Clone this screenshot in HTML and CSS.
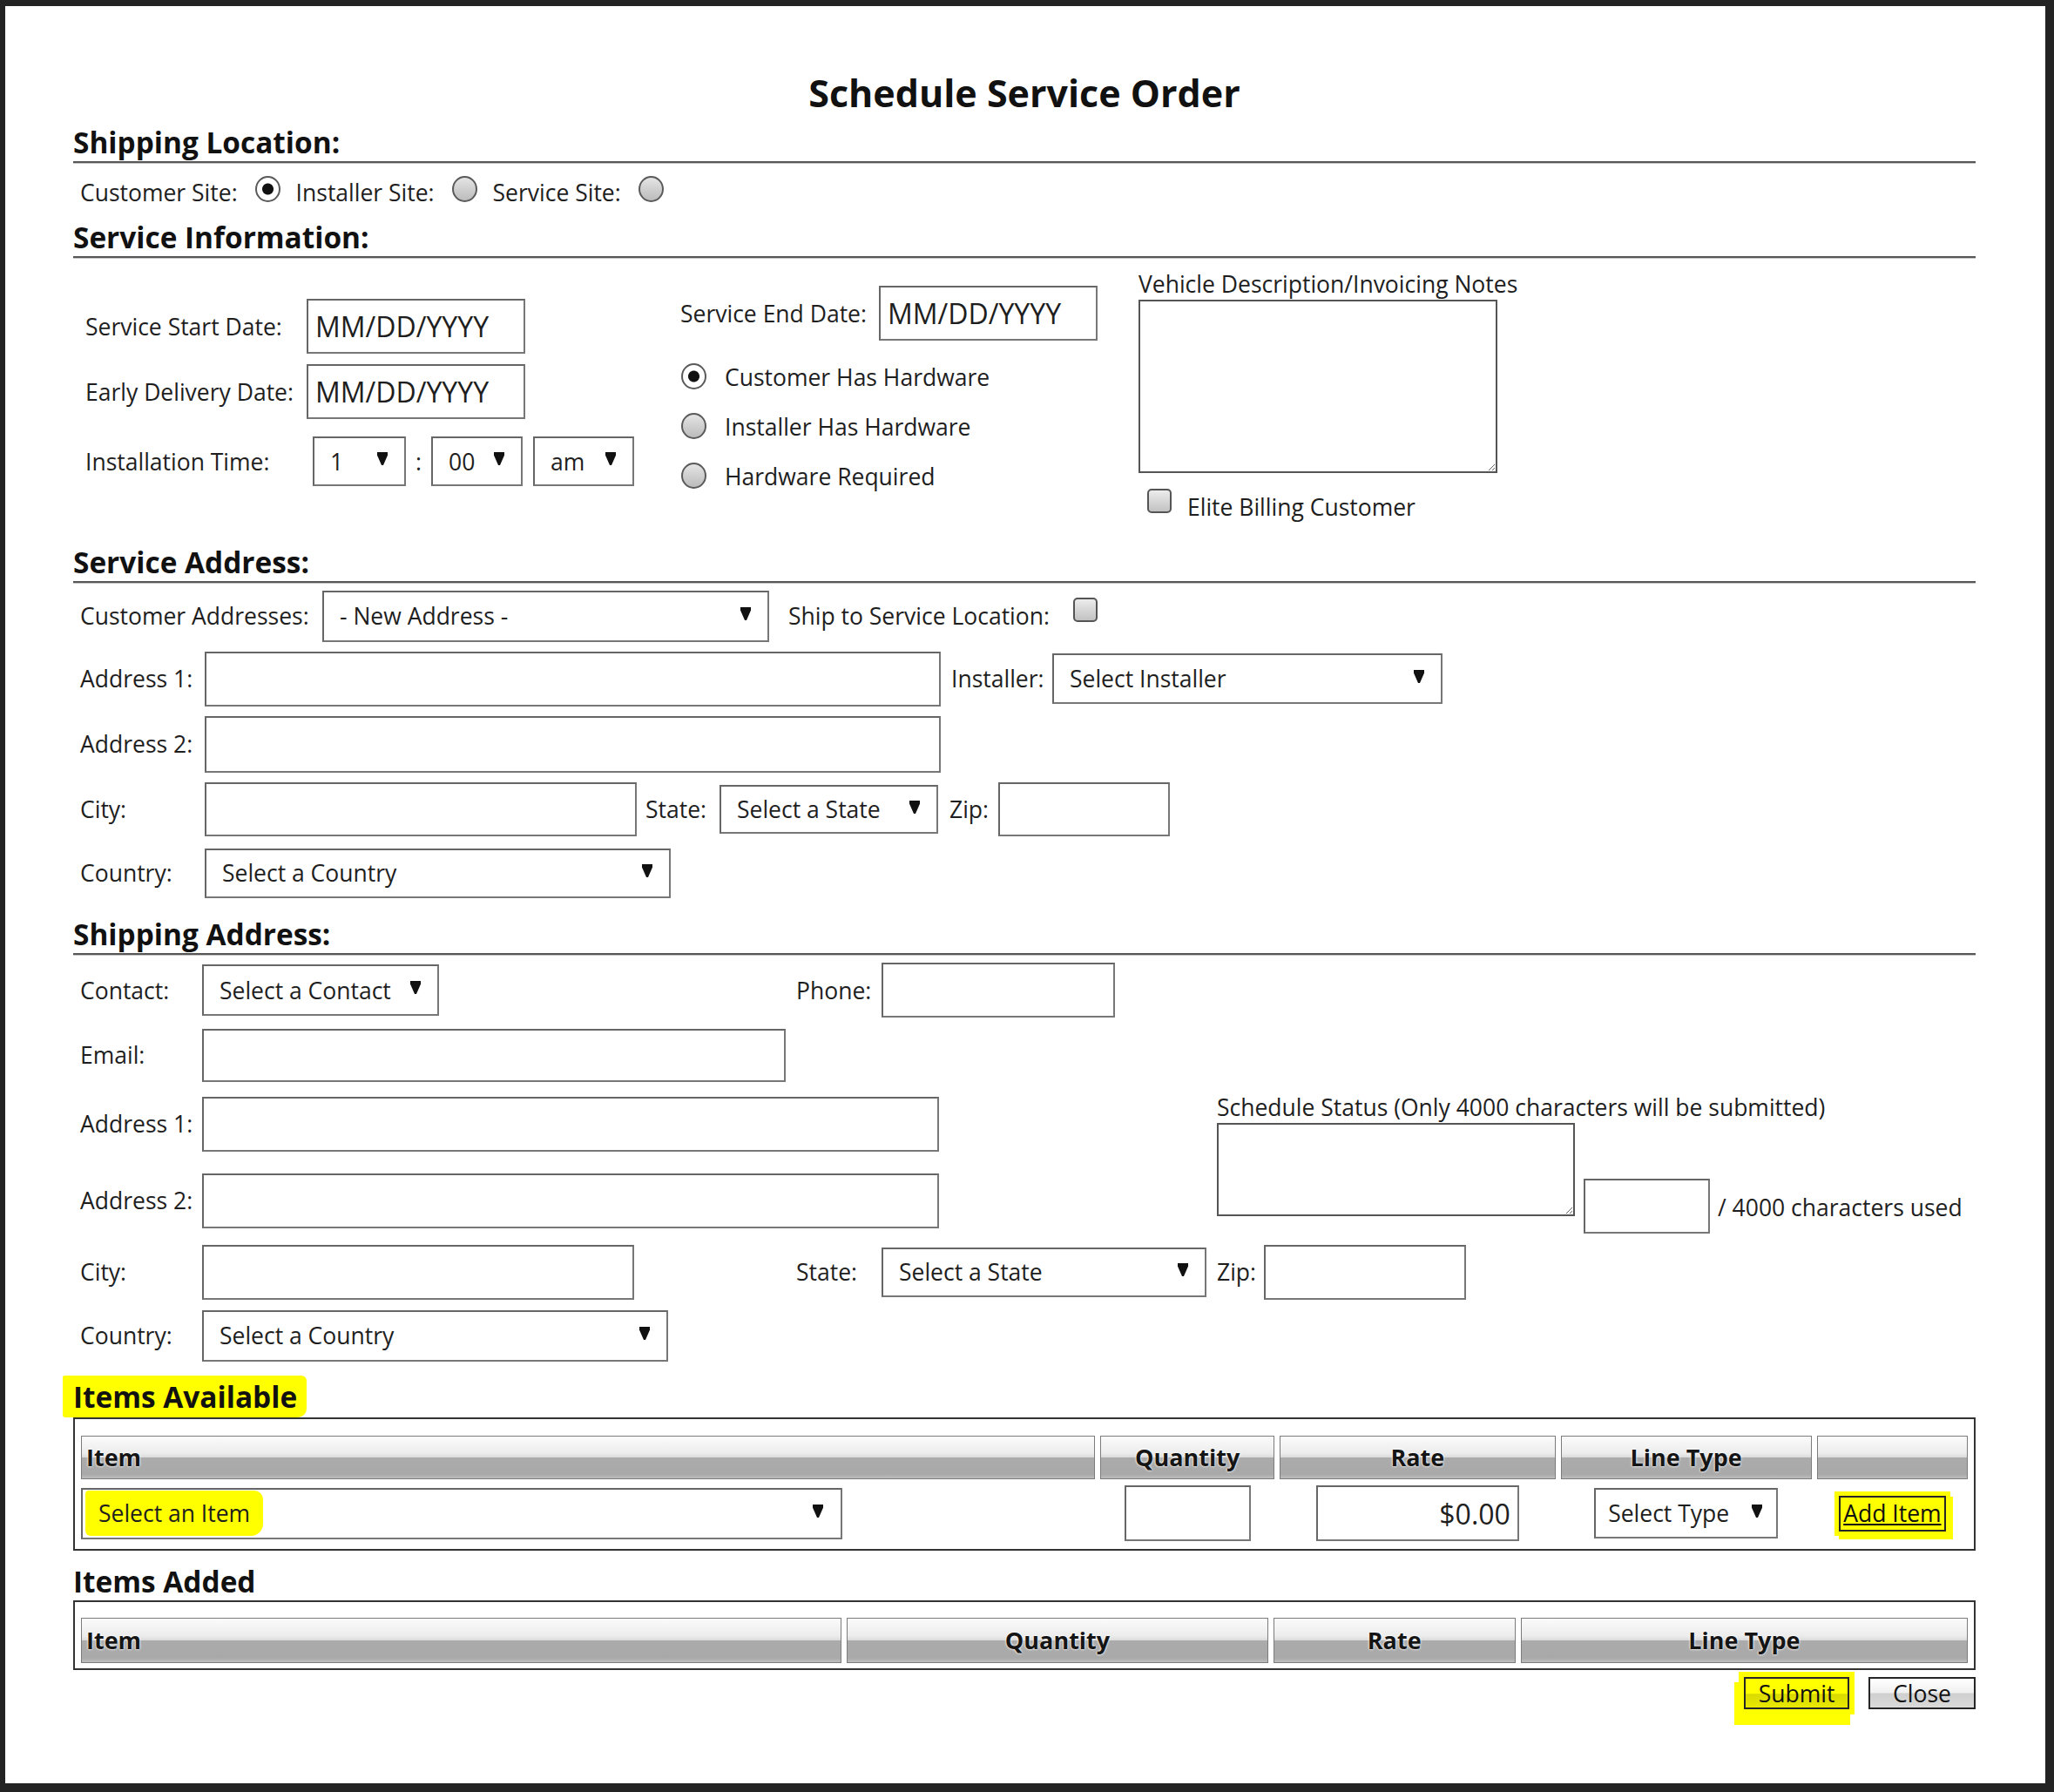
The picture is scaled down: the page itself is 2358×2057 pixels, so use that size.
FILE: index.html
```html
<!DOCTYPE html>
<html>
<head>
<meta charset="utf-8">
<title>Schedule Service Order</title>
<link rel="stylesheet" href="styles.css">
</head>
<body>
<div class="sheet">
  <h1 class="title">Schedule Service Order</h1>

  <h2 class="sec-h mt11">Shipping Location:</h2>
  <div class="loc-row">
    <span>Customer Site:</span><span class="radio on"></span>
    <span>Installer Site:</span><span class="radio"></span>
    <span>Service Site:</span><span class="radio"></span>
  </div>

  <h2 class="sec-h mt3">Service Information:</h2>
  <div class="svc-info">
    <div class="col-left">
      <div class="f-row"><span class="lbl w-l-si">Service Start Date:</span><input class="inp w-date h63" value="MM/DD/YYYY"></div>
      <div class="f-row mt12"><span class="lbl w-l-si">Early Delivery Date:</span><input class="inp w-date h63" value="MM/DD/YYYY"></div>
      <div class="f-row mt20"><span class="lbl w-l-si">Installation Time:</span>
        <div class="sel w-hr h57 ml7"><span>1</span><svg class="arr" viewBox="0 0 12 15"><path d="M0 0H12V3.5L7 15H5L0 3.5Z"/></svg></div>
        <span class="colon">:</span>
        <div class="sel w-min h57"><span>00</span><svg class="arr" viewBox="0 0 12 15"><path d="M0 0H12V3.5L7 15H5L0 3.5Z"/></svg></div>
        <div class="sel w-ampm h57 ml12"><span>am</span><svg class="arr" viewBox="0 0 12 15"><path d="M0 0H12V3.5L7 15H5L0 3.5Z"/></svg></div>
      </div>
    </div>
    <div class="col-mid">
      <div class="f-row"><span class="lbl w-l-end">Service End Date:</span><input class="inp w-date h63" value="MM/DD/YYYY"></div>
      <div class="rad-list">
        <div class="rad-row"><span class="radio on"></span><span>Customer Has Hardware</span></div>
        <div class="rad-row"><span class="radio"></span><span>Installer Has Hardware</span></div>
        <div class="rad-row"><span class="radio"></span><span>Hardware Required</span></div>
      </div>
    </div>
    <div class="col-right">
      <div class="lbl-block">Vehicle Description/Invoicing Notes</div>
      <textarea class="ta ta-notes"></textarea>
      <div class="chk-row"><span class="chk"></span><span>Elite Billing Customer</span></div>
    </div>
  </div>

  <h2 class="sec-h mt0">Service Address:</h2>
  <div class="addr-rows">
    <div class="row h70">
      <span class="lbl w-l-ca">Customer Addresses:</span>
      <div class="sel w-custaddr h59"><span>- New Address -</span><svg class="arr" viewBox="0 0 12 15"><path d="M0 0H12V3.5L7 15H5L0 3.5Z"/></svg></div>
      <span class="lbl w-l-ship">Ship to Service Location:</span>
      <span class="chk chk-up"></span>
    </div>
    <div class="row h74">
      <span class="lbl w-l-a">Address 1:</span>
      <input class="inp w-addr h63" value="">
      <span class="lbl w-l-inst">Installer:</span>
      <div class="sel w-inst h58"><span>Select Installer</span><svg class="arr" viewBox="0 0 12 15"><path d="M0 0H12V3.5L7 15H5L0 3.5Z"/></svg></div>
    </div>
    <div class="row h76">
      <span class="lbl w-l-a">Address 2:</span>
      <input class="inp w-addr h65" value="">
    </div>
    <div class="row h74">
      <span class="lbl w-l-a">City:</span>
      <input class="inp w-city h62" value="">
      <span class="lbl w-l-st">State:</span>
      <div class="sel w-state h56"><span>Select a State</span><svg class="arr" viewBox="0 0 12 15"><path d="M0 0H12V3.5L7 15H5L0 3.5Z"/></svg></div>
      <span class="lbl w-l-zip">Zip:</span>
      <input class="inp w-zip h62" value="">
    </div>
    <div class="row h72">
      <span class="lbl w-l-a">Country:</span>
      <div class="sel w-country h57"><span>Select a Country</span><svg class="arr" viewBox="0 0 12 15"><path d="M0 0H12V3.5L7 15H5L0 3.5Z"/></svg></div>
    </div>
  </div>

  <h2 class="sec-h mt16">Shipping Address:</h2>
  <div class="ship-grid">
    <span class="g-lbl r1">Contact:</span>
    <div class="sel w-contact h59 r1 c2"><span>Select a Contact</span><svg class="arr" viewBox="0 0 12 15"><path d="M0 0H12V3.5L7 15H5L0 3.5Z"/></svg></div>
    <span class="g-lbl r1 c3">Phone:</span>
    <input class="inp w-phone h63 r1 c4" value="">

    <span class="g-lbl r2">Email:</span>
    <input class="inp w-email h61 r2 c2-5" value="">

    <span class="g-lbl r3">Address 1:</span>
    <input class="inp w-addr2 h63 r3 c2-5" value="">

    <span class="g-lbl r4">Address 2:</span>
    <input class="inp w-addr2 h63 r4 c2-5" value="">

    <div class="status r3-5 c5">
      <div class="lbl-block">Schedule Status (Only 4000 characters will be submitted)</div>
      <div class="status-row">
        <textarea class="ta ta-status"></textarea>
        <input class="inp w-count h63" value="">
        <span class="count-txt">/ 4000 characters used</span>
      </div>
    </div>

    <span class="g-lbl r5">City:</span>
    <input class="inp w-city h63 r5 c2" value="">
    <span class="g-lbl r5 c3">State:</span>
    <div class="sel w-state2 h57 r5 c4"><span>Select a State</span><svg class="arr" viewBox="0 0 12 15"><path d="M0 0H12V3.5L7 15H5L0 3.5Z"/></svg></div>
    <div class="zip-cell r5 c5"><span class="lbl w-l-zip2">Zip:</span><input class="inp w-zip2 h63" value=""></div>

    <span class="g-lbl r6">Country:</span>
    <div class="sel w-country h59 r6 c2"><span>Select a Country</span><svg class="arr" viewBox="0 0 12 15"><path d="M0 0H12V3.5L7 15H5L0 3.5Z"/></svg></div>
  </div>

  <h2 class="items-h"><span class="hl-head">Items Available</span></h2>
  <div class="tbox tbox1">
    <table class="itbl">
      <thead>
        <tr>
          <th class="th-left cw-item1">Item</th>
          <th class="cw-qty1">Quantity</th>
          <th class="cw-rate1">Rate</th>
          <th class="cw-type1">Line Type</th>
          <th class="cw-act1"></th>
        </tr>
      </thead>
      <tbody>
        <tr>
          <td class="td-left">
            <div class="sel sel-item w-item h59"><span class="hl-item">Select an Item</span><svg class="arr" viewBox="0 0 12 15"><path d="M0 0H12V3.5L7 15H5L0 3.5Z"/></svg></div>
          </td>
          <td><input class="inp w-qty h64" value=""></td>
          <td><input class="inp inp-rate w-rate h64" value="$0.00"></td>
          <td>
            <div class="sel sel-type w-type h58"><span>Select Type</span><svg class="arr" viewBox="0 0 12 15"><path d="M0 0H12V3.5L7 15H5L0 3.5Z"/></svg></div>
          </td>
          <td><button class="btn btn-add" type="button">Add Item</button></td>
        </tr>
      </tbody>
    </table>
  </div>

  <h2 class="items-h2">Items Added</h2>
  <div class="tbox tbox2">
    <table class="itbl itbl2">
      <thead>
        <tr>
          <th class="th-left cw-item2">Item</th>
          <th class="cw-qty2">Quantity</th>
          <th class="cw-rate2">Rate</th>
          <th class="cw-type2">Line Type</th>
        </tr>
      </thead>
    </table>
  </div>

  <div class="btn-row">
    <button class="btn btn-submit" type="button">Submit</button>
    <button class="btn btn-close" type="button">Close</button>
  </div>
</div>
</body>
</html>
```

FILE: styles.css
```css
* { box-sizing: border-box; }
html, body { margin: 0; padding: 0; }
body {
  background: #232323;
  font-family: "Open Sans", "Noto Sans", sans-serif;
  font-size: 26.5px;
  line-height: 36px;
  color: #1e1e1e;
}
.sheet {
  margin: 7px 10px 10px 6px;
  height: 2040px;
  background: #fff;
  padding: 0 80px 0 78px;
  overflow: hidden;
}
.title {
  margin: 73px 0 0;
  text-align: center;
  font-size: 43px;
  line-height: 54px;
  font-weight: 700;
  color: #111;
}
.sec-h {
  margin: 0;
  font-size: 33.4px;
  line-height: 36px;
  font-weight: 700;
  color: #111;
  padding-bottom: 4px;
  border-bottom: 2px solid #575757;
  box-shadow: 0 1px 0 #c4c4c4;
}
.mt0 { margin-top: 0; }
.mt3 { margin-top: 3px; }
.mt11 { margin-top: 11px; }
.mt16 { margin-top: 16px; }
.mt12 { margin-top: 12px; }
.mt20 { margin-top: 20px; }
.ml7 { margin-left: 7px; }
.ml12 { margin-left: 12px; }

/* radios & checkboxes */
.radio {
  display: inline-block;
  flex: none;
  width: 29px;
  height: 30px;
  border-radius: 50%;
  border: 2px solid #5a5a5a;
  background: linear-gradient(#e4e4e4, #bcbcbc);
}
.radio.on {
  background: radial-gradient(circle, #111 0 6px, #fff 7px);
}
.chk {
  display: inline-block;
  flex: none;
  width: 28px;
  height: 28px;
  border: 2px solid #555;
  border-radius: 5px;
  background: linear-gradient(#ececec, #c2c2c2);
}

/* shipping location */
.loc-row {
  margin-top: 4px;
  height: 60px;
  display: flex;
  align-items: center;
  padding-left: 8px;
}
.loc-row .radio { margin: 0 18px 8px 20px; }

/* service information */
.svc-info {
  height: 331px;
  display: grid;
  grid-template-columns: 697px 526px 1fr;
  align-items: start;
}
.col-left { margin-top: 47px; padding-left: 14px; }
.col-mid { margin-top: 32px; }
.col-right { margin-top: 12px; }
.f-row { display: flex; align-items: center; }
.lbl { flex: none; white-space: nowrap; }
.w-l-si { width: 254px; }
.w-l-end { width: 228px; }
.colon { width: 29px; text-align: center; flex: none; }
.rad-list { margin-top: 13px; }
.rad-row { height: 57px; display: flex; align-items: center; padding-left: 1px; }
.rad-row .radio { margin-right: 21px; margin-bottom: 2px; }
.lbl-block { white-space: nowrap; }
.chk-row { margin-top: 21px; display: flex; align-items: flex-start; }
.chk-row .chk { margin: -3px 18px 0 10px; }

/* controls */
.inp {
  flex: none;
  display: block;
  font-family: inherit;
  font-size: 32px;
  color: #1e1e1e;
  border: 2px solid #666;
  border-right-color: #777;
  border-bottom-color: #777;
  background: #fff;
  padding: 0 8px;
  margin: 0;
  outline: none;
}
.inp-rate { text-align: right; padding-right: 8px; }
.sel {
  flex: none;
  display: flex;
  align-items: center;
  justify-content: space-between;
  border: 2px solid #666;
  border-right-color: #777;
  border-bottom-color: #777;
  background: #fff;
  padding: 0 19px 0 18px;
  white-space: nowrap;
  text-align: left;
}
.arr { width: 12px; height: 15px; fill: #111; flex: none; margin-bottom: 6px; }
.ta {
  display: block;
  font: inherit;
  border: 2px solid #555;
  background: #fff;
  margin: 0;
  padding: 4px;
  outline: none;
}
.ta-notes { width: 412px; height: 199px; }
.ta-status { width: 411px; height: 107px; margin-bottom: 20px; flex: none; }

.w-date { width: 251px; }
.w-hr { width: 107px; }
.w-min { width: 105px; }
.w-ampm { width: 116px; }
.w-custaddr { width: 513px; }
.w-addr { width: 845px; }
.w-inst { width: 448px; }
.w-city { width: 496px; }
.w-state { width: 251px; }
.w-zip { width: 197px; }
.w-country { width: 535px; }
.w-contact { width: 272px; }
.w-phone { width: 268px; }
.w-email { width: 670px; }
.w-addr2 { width: 846px; }
.w-state2 { width: 373px; }
.w-zip2 { width: 232px; }
.w-count { width: 145px; }
.w-item { width: 874px; }
.w-qty { width: 145px; }
.w-rate { width: 233px; }
.w-type { width: 211px; }

.h56 { height: 56px; }
.h57 { height: 57px; }
.h58 { height: 58px; }
.h59 { height: 59px; }
.h61 { height: 61px; }
.h62 { height: 62px; }
.h63 { height: 63px; }
.h64 { height: 64px; }
.h65 { height: 65px; }

/* service address rows */
.addr-rows { padding-left: 8px; margin-top: 3px; }
.row { display: flex; align-items: center; }
.h70 { height: 70px; }
.h72 { height: 72px; }
.h74 { height: 74px; }
.h76 { height: 76px; }
.w-l-ca { width: 278px; }
.w-l-ship { width: 327px; margin-left: 22px; }
.chk-up { margin-bottom: 14px; }
.w-l-a { width: 143px; }
.w-l-inst { width: 116px; margin-left: 12px; }
.w-l-st { width: 85px; margin-left: 10px; }
.w-l-zip { width: 56px; margin-left: 13px; }
.w-l-zip2 { width: 54px; }

/* shipping address grid */
.ship-grid {
  margin-top: 4px;
  padding-left: 8px;
  display: grid;
  grid-template-columns: 140px 682px 98px 385px 1fr;
  grid-template-rows: 73px 76px 82px 94px 70px 76px;
  align-items: center;
  justify-items: start;
}
.g-lbl { grid-column: 1; white-space: nowrap; }
.r1 { grid-row: 1; }
.r2 { grid-row: 2; }
.r3 { grid-row: 3; }
.r4 { grid-row: 4; }
.r5 { grid-row: 5; }
.r6 { grid-row: 6; }
.r3-5 { grid-row: 3 / 5; }
.c2 { grid-column: 2; }
.c3 { grid-column: 3; }
.c4 { grid-column: 4; }
.c5 { grid-column: 5; }
.c2-5 { grid-column: 2 / 5; }
.status { align-self: start; margin-top: 4px; }
.status-row { display: flex; align-items: flex-end; }
.status-row .w-count { margin-left: 10px; }
.count-txt { margin: 0 0 12px 9px; white-space: nowrap; }
.zip-cell { display: flex; align-items: center; }

/* items */
.items-h {
  margin: 8px 0 0;
  font-size: 33.4px;
  line-height: 36px;
  font-weight: 700;
  color: #111;
}
.hl-head {
  display: inline-block;
  background: #ffff00;
  padding: 6px 11px 6px 12px;
  margin-left: -12px;
  border-radius: 2px 6px 10px 3px;
}
.items-h2 {
  margin: 17px 0 0;
  font-size: 33.4px;
  line-height: 36px;
  font-weight: 700;
  color: #111;
}
.tbox { border: 2px solid #333; }
.tbox1 { padding: 13px 1px 2px; }
.tbox2 { margin-top: 4px; padding: 12px 1px 0; }
.itbl {
  width: 100%;
  table-layout: fixed;
  border-collapse: separate;
  border-spacing: 6px;
}
.itbl th {
  height: 50px;
  border: 1px solid #7c7c7c;
  background: linear-gradient(#fbfbfb 0%, #ececec 40%, #dcdcdc 49%, #ababab 51%, #a9a9a9 90%, #bdbdbd 100%);
  font-size: 27px;
  font-weight: 700;
  color: #151515;
  text-shadow: 0 0 2px #fff, 0 0 3px #fff;
  text-align: center;
  padding: 0 5px;
  line-height: 36px;
}
.itbl2 th { height: 52px; }
.itbl .th-left { text-align: left; }
.cw-item1 { width: 1163px; }
.cw-qty1 { width: 200px; }
.cw-rate1 { width: 316px; }
.cw-type1 { width: 288px; }
.cw-act1 { width: 173px; }
.cw-item2 { width: 873px; }
.cw-qty2 { width: 483px; }
.cw-rate2 { width: 278px; }
.cw-type2 { width: 513px; }
.itbl td { height: 66px; padding: 0; vertical-align: middle; }
.itbl td .inp, .itbl td .sel, .itbl td .btn { margin: 0 auto; }
.itbl td.td-left .sel { margin: 0; }
.sel-item { padding-left: 3px; padding-right: 20px; }
.hl-item {
  display: flex;
  align-items: center;
  height: 52px;
  background: #ffff00;
  padding: 0 15px 0 15px;
  border-radius: 4px 10px 14px 6px;
}
.sel-type { padding-left: 14px; padding-right: 16px; }

.btn {
  display: block;
  font: inherit;
  color: #111;
  border: 2px solid #262626;
  background: linear-gradient(#ffffff 0%, #f0f0f0 48%, #cfcfcf 52%, #dadada 100%);
  padding: 0;
  margin: 0;
  line-height: 32px;
}
.btn-add {
  width: 123px;
  height: 41px;
  background: #ffff00;
  text-decoration: underline;
  box-shadow: 0 0 0 5px #ffff00, 4px 5px 0 4px #ffff00;
}
.btn-row {
  margin-top: 8px;
  display: flex;
  justify-content: flex-end;
  align-items: center;
}
.btn-submit {
  width: 121px;
  height: 37px;
  background: linear-gradient(#ffff00 0%, #ffff00 50%, #dada00 54%, #e8e800 100%);
  box-shadow: 0 0 0 6px #ffff00, -5px 12px 0 6px #ffff00;
}
.btn-close {
  width: 123px;
  height: 37px;
  margin-left: 22px;
}
```
